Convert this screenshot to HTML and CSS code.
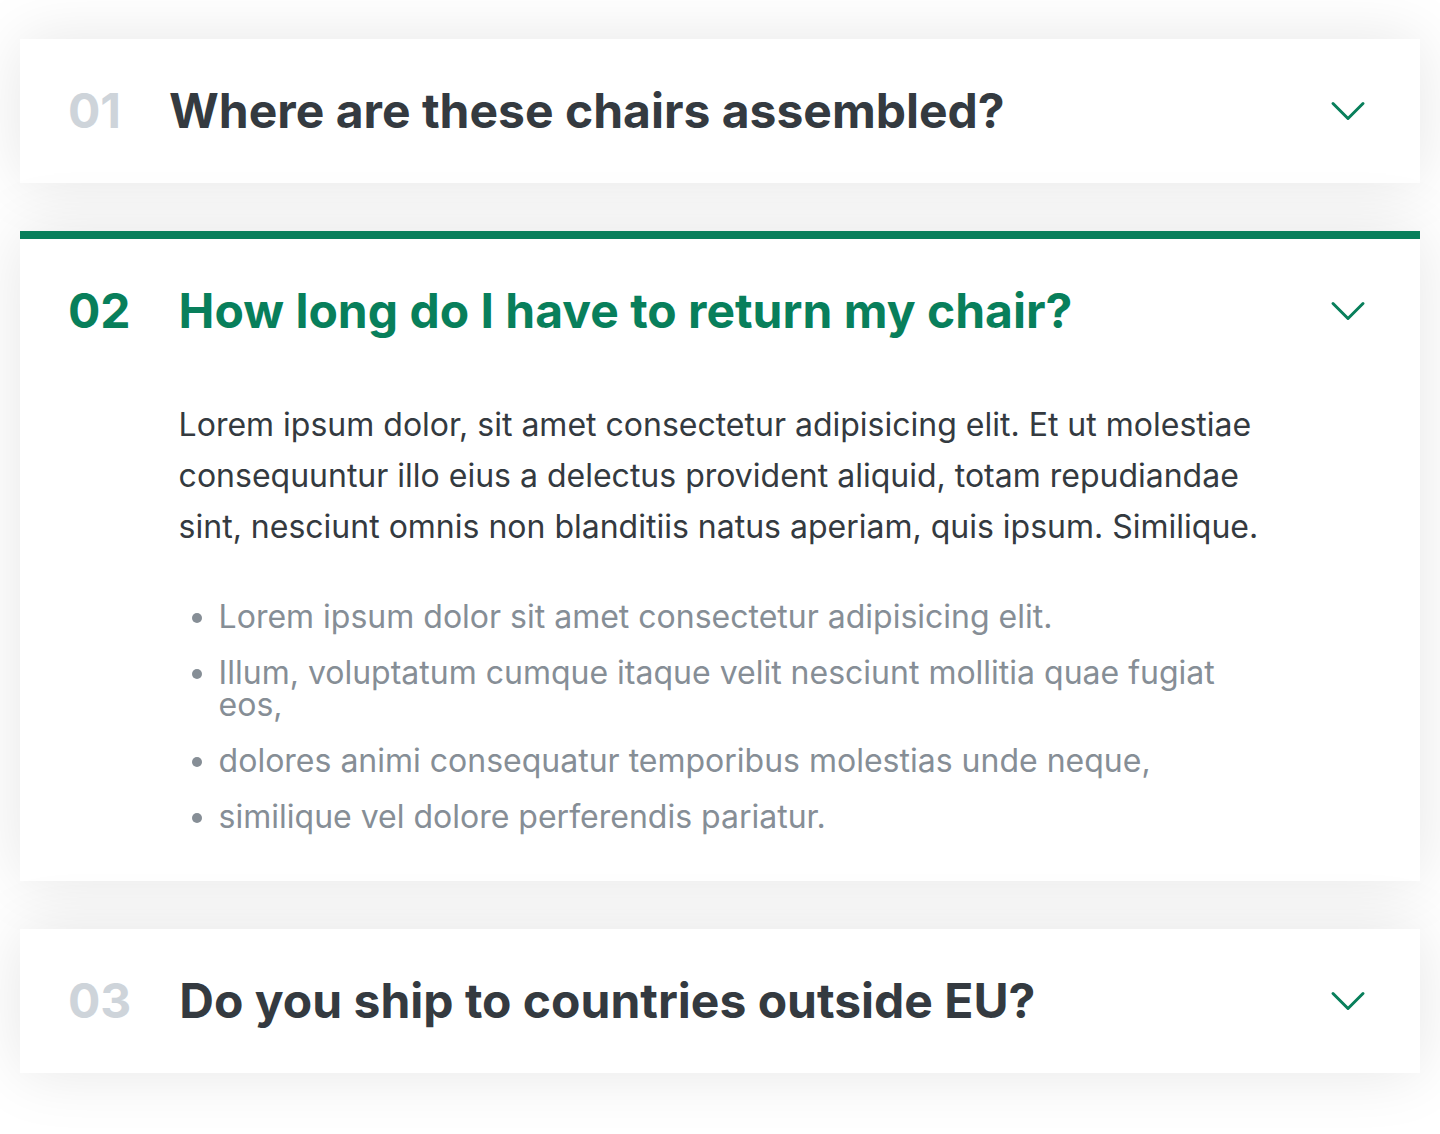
FILE: index.html
```html
<!DOCTYPE html>
<html lang="en">
<head>
<meta charset="utf-8">
<title>Accordion</title>
<link rel="stylesheet" href="styles.css">
</head>
<body>
<div class="accordion">
  <div class="item">
    <p class="number">01</p>
    <p class="text">Where are these chairs assembled?</p>
    <svg class="icon" viewBox="0 0 24 24" fill="none" stroke-width="1.5"><path stroke-linecap="round" stroke-linejoin="round" d="m19.5 8.25-7.5 7.5-7.5-7.5"/></svg>
  </div>
  <div class="item open">
    <p class="number">02</p>
    <p class="text">How long do I have to return my chair?</p>
    <svg class="icon" viewBox="0 0 24 24" fill="none" stroke-width="1.5"><path stroke-linecap="round" stroke-linejoin="round" d="m19.5 8.25-7.5 7.5-7.5-7.5"/></svg>
    <div class="hidden-box">
      <p>Lorem ipsum dolor, sit amet consectetur adipisicing elit. Et ut molestiae consequuntur illo eius a delectus provident aliquid, totam repudiandae sint, nesciunt omnis non blanditiis natus aperiam, quis ipsum. Similique.</p>
      <ul>
        <li>Lorem ipsum dolor sit amet consectetur adipisicing elit.</li>
        <li>Illum, voluptatum cumque itaque velit nesciunt mollitia quae fugiat eos,</li>
        <li>dolores animi consequatur temporibus molestias unde neque,</li>
        <li>similique vel dolore perferendis pariatur.</li>
      </ul>
    </div>
  </div>
  <div class="item">
    <p class="number">03</p>
    <p class="text">Do you ship to countries outside EU?</p>
    <svg class="icon" viewBox="0 0 24 24" fill="none" stroke-width="1.5"><path stroke-linecap="round" stroke-linejoin="round" d="m19.5 8.25-7.5 7.5-7.5-7.5"/></svg>
  </div>
</div>
</body>
</html>
```

FILE: styles.css
```css
* {
  margin: 0;
  padding: 0;
  box-sizing: border-box;
}

body {
  font-family: "Inter", "Noto Sans", sans-serif;
  color: #343a40;
  line-height: 1;
  background: #fff;
}

.accordion {
  width: 1400px;
  margin: 0 auto;
  padding: 39px 0 60px;
  display: flex;
  flex-direction: column;
  gap: 48px;
}

.item {
  background: #fff;
  box-shadow: 0 0 64px rgba(0, 0, 0, 0.1);
  padding: 48px;
  display: grid;
  grid-template-columns: auto 1fr auto;
  column-gap: 48px;
  row-gap: 64px;
  align-items: center;
}

.number,
.text {
  font-size: 48px;
  font-weight: 700;
}

.number {
  color: #ced4da;
}

.icon {
  width: 48px;
  height: 48px;
  stroke: #087f5b;
}

.hidden-box {
  grid-column: 2;
}

.hidden-box p {
  font-size: 32px;
  line-height: 1.6;
  margin-bottom: 48px;
}

.hidden-box ul {
  color: #868e96;
  font-size: 32px;
  padding-left: 40px;
  display: flex;
  flex-direction: column;
  gap: 24px;
}

.open {
  border-top: 8px solid #087f5b;
}

.open .number,
.open .text {
  color: #087f5b;
}
```
